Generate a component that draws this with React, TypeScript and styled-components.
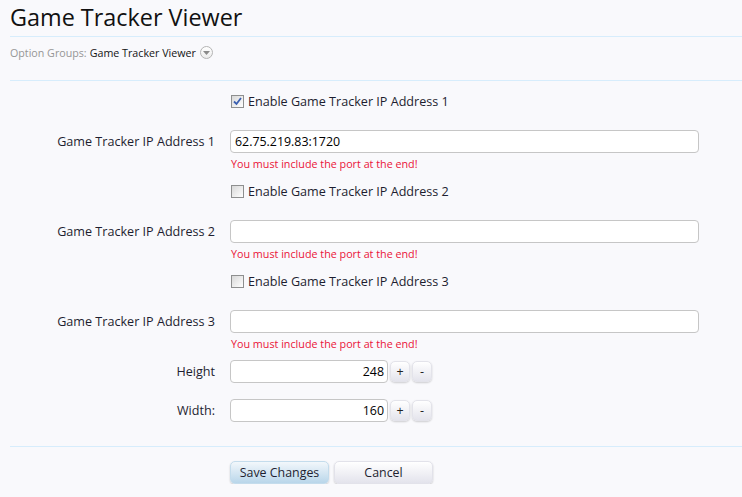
import React from "react";
import styled, { createGlobalStyle } from "styled-components";

const GlobalStyle = createGlobalStyle`
  html, body { margin: 0; padding: 0; }
  body {
    background: #f9f9fc;
    font-family: "Open Sans", "Noto Sans", sans-serif;
    color: #1a1a2e;
  }
`;

const Page = styled.div`
  padding-left: 10px;
  width: 732px;
`;

const Title = styled.h1`
  margin: 0;
  height: 37px;
  box-sizing: border-box;
  padding-top: 2px;
  font-size: 23.4px;
  font-weight: normal;
  line-height: 30px;
  color: #111;
  border-bottom: 1px solid #d7edfc;
`;

const Crumb = styled.div`
  height: 44px;
  box-sizing: border-box;
  padding-top: 9px;
  font-size: 10.7px;
  line-height: 14px;
  border-bottom: 1px solid #d7edfc;
  display: flex;
  align-items: flex-start;
  gap: 3px;
`;

const CrumbLabel = styled.span`
  color: #969696;
`;

const CrumbValue = styled.span`
  color: #141414;
`;

const DropCircle = styled.span`
  box-sizing: border-box;
  width: 13px;
  height: 13px;
  border-radius: 50%;
  border: 1px solid #b4b4b4;
  background: linear-gradient(#ffffff, #ececec);
  display: inline-flex;
  align-items: center;
  justify-content: center;
  margin-left: 1px;
  margin-top: 0px;
`;

const Form = styled.form`
  padding-top: 14px;
  display: flex;
  flex-direction: column;
`;

const Row = styled.div<{ $mt?: number }>`
  display: grid;
  grid-template-columns: 205px 469px;
  column-gap: 15px;
  align-items: center;
  margin-top: ${(p) => p.$mt ?? 0}px;
`;

const Label = styled.label`
  text-align: right;
  font-size: 12.6px;
  color: #1e1e30;
`;

const CheckLine = styled.label`
  display: flex;
  align-items: center;
  gap: 4px;
  height: 13px;
  font-size: 12.6px;
  color: #1e1e30;
  padding-left: 1px;
`;

const Box = styled.span`
  box-sizing: border-box;
  width: 13px;
  height: 13px;
  border: 1px solid #8e8f8f;
  background: linear-gradient(135deg, #d8d8d8, #ffffff);
  display: inline-flex;
  align-items: center;
  justify-content: center;
`;

const TextInput = styled.input`
  box-sizing: border-box;
  width: 469px;
  height: 23px;
  border: 1px solid #c6c6c6;
  border-radius: 4px;
  background: #fff;
  font-family: "Open Sans", sans-serif;
  font-size: 12.4px;
  color: #000;
  padding: 0 4px;
  outline: none;
`;

const ErrorText = styled.div`
  margin-top: 4px;
  font-size: 10.75px;
  line-height: 14px;
  color: #ea1338;
  padding-left: 1px;
`;

const Spinner = styled.div`
  display: flex;
  align-items: center;
  gap: 2px;
`;

const NumInput = styled(TextInput)`
  width: 158px;
  text-align: right;
  padding-right: 3px;
`;

const SpinBtn = styled.button`
  box-sizing: border-box;
  width: 20px;
  height: 21px;
  border: 1px solid #e3e3ea;
  border-radius: 5px;
  background: linear-gradient(#ffffff, #e4e4ec);
  box-shadow: 0 1px 2px rgba(0, 0, 0, 0.18);
  font-family: "Open Sans", sans-serif;
  font-size: 12.5px;
  color: #222;
  padding: 0;
  line-height: 18px;
`;

const Divider = styled.div`
  margin-top: 24px;
  border-top: 1px solid #d7edfc;
`;

const Buttons = styled.div`
  display: flex;
  gap: 5px;
  margin: 14px 0 0 220px;
`;

const Button = styled.button<{ $primary?: boolean }>`
  box-sizing: border-box;
  width: 99px;
  height: 23px;
  border-radius: 5px;
  border: 1px solid ${(p) => (p.$primary ? "#c4dcec" : "#e2e2ea")};
  background: ${(p) =>
    p.$primary
      ? "linear-gradient(#f2f7fb, #b9d6ea)"
      : "linear-gradient(#ffffff, #e3e3ec)"};
  box-shadow: 0 1px 2px rgba(0, 0, 0, 0.2);
  font-family: "Open Sans", sans-serif;
  font-size: 12.4px;
  color: #1e1e30;
  padding: 0;
`;

const Check = () => (
  <svg width="9" height="9" viewBox="0 0 9 9">
    <path d="M1 4.5 L3.5 7 L8 1" stroke="#3b5fb0" strokeWidth="1.8" fill="none" />
  </svg>
);

type GroupProps = { n: number; checked: boolean; value: string; first?: boolean };

const Group = ({ n, checked, value, first }: GroupProps) => (
  <>
    <Row $mt={first ? 0 : 14}>
      <span />
      <CheckLine>
        <Box>{checked && <Check />}</Box>
        Enable Game Tracker IP Address {n}
      </CheckLine>
    </Row>
    <Row $mt={22}>
      <Label>Game Tracker IP Address {n}</Label>
      <TextInput defaultValue={value} />
    </Row>
    <Row>
      <span />
      <ErrorText>You must include the port at the end!</ErrorText>
    </Row>
  </>
);

const SpinRow = ({ label, value, mt }: { label: string; value: string; mt: number }) => (
  <Row $mt={mt}>
    <Label>{label}</Label>
    <Spinner>
      <NumInput defaultValue={value} />
      <SpinBtn type="button">+</SpinBtn>
      <SpinBtn type="button">-</SpinBtn>
    </Spinner>
  </Row>
);

export default function App() {
  return (
    <Page>
      <GlobalStyle />
      <Title>Game Tracker Viewer</Title>
      <Crumb>
        <CrumbLabel>Option Groups:</CrumbLabel>
        <CrumbValue>Game Tracker Viewer</CrumbValue>
        <DropCircle>
          <svg width="7" height="4" viewBox="0 0 7 4">
            <path d="M0 0 L7 0 L3.5 4 Z" fill="#8a8a8a" />
          </svg>
        </DropCircle>
      </Crumb>
      <Form onSubmit={(e) => e.preventDefault()}>
        <Group n={1} checked value="62.75.219.83:1720" first />
        <Group n={2} checked={false} value="" />
        <Group n={3} checked={false} value="" />
        <SpinRow label="Height" value="248" mt={9} />
        <SpinRow label="Width:" value="160" mt={16} />
        <Divider />
        <Buttons>
          <Button type="button" $primary>Save Changes</Button>
          <Button type="button">Cancel</Button>
        </Buttons>
      </Form>
    </Page>
  );
}
